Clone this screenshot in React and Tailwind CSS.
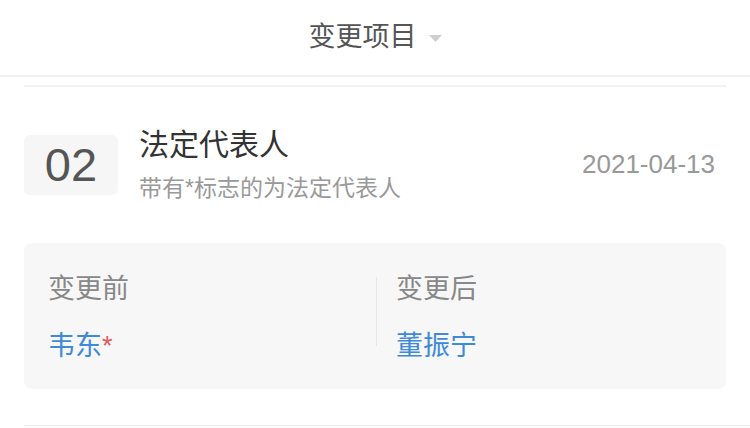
export default function App() {
  const font = { fontFamily: '"Liberation Sans", "Noto Sans CJK SC", sans-serif' };
  return (
    <div className="w-[750px] h-[428px] bg-white overflow-hidden" style={font}>
      {/* Header */}
      <div className="h-[77px] flex items-center justify-center border-b-2 border-[#efefef]">
        <span className="text-[27px] text-[#555] leading-none">变更项目</span>
        <svg width="13" height="7" viewBox="0 0 13 7" className="ml-[12px] mt-[2px]">
          <polygon points="0,0 13,0 6.5,7" fill="#cfcfcf" />
        </svg>
      </div>

      <div className="px-6">
        <div className="mt-[8px] border-t-2 border-[#f1f1f1]" />

        {/* Item header */}
        <div className="flex items-center mt-[38px]">
          <div className="w-[94px] h-[60px] rounded-md bg-[#f6f6f6] flex items-center justify-center">
            <span className="text-[47px] text-[#555] leading-none">02</span>
          </div>
          <div className="ml-[21px] flex-1">
            <div className="text-[30px] text-[#333] leading-[36px] mt-[2px]">法定代表人</div>
            <div className="text-[23px] text-[#999] leading-[32px] mt-[9px]">带有*标志的为法定代表人</div>
          </div>
          <div className="text-[26px] text-[#999] mr-[11px]">2021-04-13</div>
        </div>

        {/* Change panel */}
        <div className="mt-[39px] h-[146px] rounded-lg bg-[#f7f7f7] flex items-start pt-[28px]">
          <div className="flex-1 pl-[24px]">
            <div className="text-[27px] text-[#888] leading-[36px]">变更前</div>
            <div className="text-[27px] text-[#3f8ad8] leading-[36px] mt-[21px]">
              韦东<span className="text-[#e25b5b]">*</span>
            </div>
          </div>
          <div className="w-px h-[69px] bg-[#e6e6e6] mt-[6px] -ml-[2px]" />
          <div className="flex-1 pl-[19px]">
            <div className="text-[27px] text-[#888] leading-[36px]">变更后</div>
            <div className="text-[27px] text-[#3f8ad8] leading-[36px] mt-[21px]">董振宁</div>
          </div>
        </div>
      </div>

      <div className="ml-6 mt-[36px] border-t border-[#ececec]" />
    </div>
  );
}
